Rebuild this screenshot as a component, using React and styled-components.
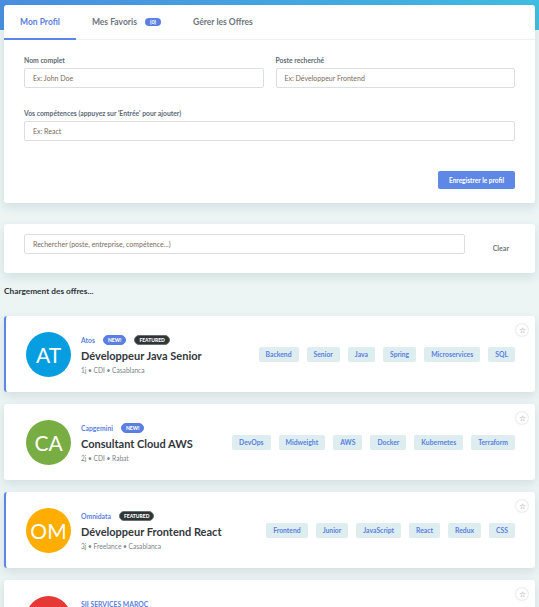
import React from 'react';
import styled, { createGlobalStyle } from 'styled-components';

const GlobalStyle = createGlobalStyle`
  html, body { margin: 0; padding: 0; }
  body {
    font-family: Lato, "Open Sans", sans-serif;
    background: #ecf4f4;
  }
`;

const Page = styled.div`
  min-height: 100vh;
  padding: 5px 4px 0;
  box-sizing: border-box;
  background: linear-gradient(90deg, #4a8ee0, #40bde2) top / 100% 30px no-repeat, #ecf4f4;
`;

const Card = styled.div`
  background: #fff;
  border-radius: 3px;
  box-shadow: 0 4px 10px rgba(60, 110, 120, 0.15);
`;

const Tabs = styled.div`
  display: flex;
  height: 34px;
  border-bottom: 1px solid #eef0f2;
`;

const Tab = styled.div`
  display: flex;
  align-items: center;
  gap: 8px;
  padding: 0 16px;
  font-size: 8.5px;
  font-weight: 700;
  color: ${(p) => (p.$active ? '#5b7fe0' : '#6d7580')};
  border-bottom: 2px solid ${(p) => (p.$active ? '#5b86e5' : 'transparent')};
  margin-bottom: -1px;
`;

const CountBadge = styled.span`
  background: #5b7fe0;
  color: #fff;
  font-size: 5.5px;
  padding: 1px 5px;
  border-radius: 6px;
`;

const FormBody = styled.div`
  padding: 16px 20px 14px;
`;

const Grid = styled.div`
  display: grid;
  grid-template-columns: 1fr 1fr;
  gap: 21px 12px;
`;

const Field = styled.div`
  display: flex;
  flex-direction: column;
  gap: 4px;
  grid-column: ${(p) => (p.$full ? '1 / -1' : 'auto')};
`;

const Label = styled.label`
  font-size: 6.8px;
  font-weight: 700;
  color: #5c6a78;
`;

const Input = styled.div`
  height: 20px;
  border: 1px solid #dcdfe2;
  border-radius: 2px;
  box-sizing: border-box;
  display: flex;
  align-items: center;
  padding: 0 8px;
  font-size: 7px;
  color: #7b6a5c;
  flex: ${(p) => (p.$grow ? 1 : 'none')};
`;

const Actions = styled.div`
  display: flex;
  justify-content: flex-end;
  margin-top: 30px;
`;

const SaveButton = styled.button`
  width: 77px;
  height: 18px;
  background: #5f88e6;
  color: #fff;
  border: 0;
  border-radius: 2px;
  font-family: inherit;
  font-size: 6.5px;
  font-weight: 700;
  padding: 0;
`;

const SearchCard = styled(Card)`
  margin-top: 21px;
  padding: 10px 20px 19px;
  display: flex;
  align-items: center;
  gap: 28px;
`;

const ClearText = styled.span`
  font-size: 7px;
  font-weight: 700;
  color: #6d7580;
  margin-top: 8px;
  margin-right: 6px;
`;

const Loading = styled.div`
  margin: 13px 0 20px;
  font-size: 8.3px;
  font-weight: 700;
  color: #2d3238;
`;

const JobList = styled.div`
  display: flex;
  flex-direction: column;
  gap: 12px;
`;

const JobCard = styled(Card)`
  position: relative;
  height: 76px;
  display: flex;
  align-items: center;
  padding: 0 20px 0 20px;
  box-sizing: border-box;
  border-left: 2px solid ${(p) => (p.$featured ? '#5b86e5' : 'transparent')};
`;

const Avatar = styled.div`
  width: 45px;
  height: 45px;
  border-radius: 50%;
  flex: none;
  background: ${(p) => p.$color};
  color: #fff;
  font-size: 21px;
  display: flex;
  align-items: center;
  justify-content: center;
`;

const Info = styled.div`
  margin-left: 10px;
  display: flex;
  flex-direction: column;
  gap: 4px;
`;

const TopLine = styled.div`
  display: flex;
  align-items: center;
  gap: 8px;
`;

const Company = styled.span`
  font-size: 6.8px;
  font-weight: 700;
  color: #5b7fe0;
`;

const Pill = styled.span`
  font-size: 5px;
  font-weight: 900;
  color: #fff;
  background: ${(p) => (p.$dark ? '#2f3437' : '#5b7fe0')};
  border: ${(p) => (p.$dark ? '1px solid #6a6f72' : '1px solid #5b7fe0')};
  padding: 1px 4px;
  border-radius: 6px;
`;

const Title = styled.div`
  font-size: 11px;
  font-weight: 700;
  color: #33373b;
`;

const Meta = styled.div`
  font-size: 6.6px;
  color: #7b838b;
`;

const Tags = styled.div`
  margin-left: auto;
  display: flex;
  gap: 8px;
`;

const Tag = styled.span`
  background: #ddedf0;
  color: #5b7fe0;
  font-size: 6.8px;
  font-weight: 700;
  padding: 0 7px;
  height: 15px;
  display: flex;
  align-items: center;
  border-radius: 2px;
`;

const StarButton = styled.div`
  position: absolute;
  top: 8px;
  right: 7px;
  width: 12px;
  height: 12px;
  border-radius: 50%;
  background: #fff;
  box-shadow: 0 0 2px rgba(0, 0, 0, 0.25);
  display: flex;
  align-items: center;
  justify-content: center;
  font-size: 8px;
  color: #7b838b;
`;

const jobs = [
  {
    initials: 'AT', color: '#069ee0', company: 'Atos', isNew: true, featured: true,
    title: 'Développeur Java Senior', meta: '1j • CDI • Casablanca',
    tags: ['Backend', 'Senior', 'Java', 'Spring', 'Microservices', 'SQL'],
  },
  {
    initials: 'CA', color: '#78ad43', company: 'Capgemini', isNew: true, featured: false,
    title: 'Consultant Cloud AWS', meta: '2j • CDI • Rabat',
    tags: ['DevOps', 'Midweight', 'AWS', 'Docker', 'Kubernetes', 'Terraform'],
  },
  {
    initials: 'OM', color: '#ffae00', company: 'Omnidata', isNew: false, featured: true,
    title: 'Développeur Frontend React', meta: '3j • Freelance • Casablanca',
    tags: ['Frontend', 'Junior', 'JavaScript', 'React', 'Redux', 'CSS'],
  },
  {
    initials: 'SI', color: '#e53935', company: 'SII SERVICES MAROC', isNew: false, featured: false,
    title: 'Ingénieur Système', meta: '4j • CDI • Rabat',
    tags: [],
  },
];

const App = () => (
  <>
    <GlobalStyle />
    <Page>
      <Card>
        <Tabs>
          <Tab $active>Mon Profil</Tab>
          <Tab>Mes Favoris <CountBadge>(0)</CountBadge></Tab>
          <Tab>Gérer les Offres</Tab>
        </Tabs>
        <FormBody>
          <Grid>
            <Field>
              <Label>Nom complet</Label>
              <Input>Ex: John Doe</Input>
            </Field>
            <Field>
              <Label>Poste recherché</Label>
              <Input>Ex: Développeur Frontend</Input>
            </Field>
            <Field $full>
              <Label>Vos compétences (appuyez sur 'Entrée' pour ajouter)</Label>
              <Input>Ex: React</Input>
            </Field>
          </Grid>
          <Actions>
            <SaveButton>Enregistrer le profil</SaveButton>
          </Actions>
        </FormBody>
      </Card>

      <SearchCard>
        <Input $grow>Rechercher (poste, entreprise, compétence...)</Input>
        <ClearText>Clear</ClearText>
      </SearchCard>

      <Loading>Chargement des offres...</Loading>

      <JobList>
        {jobs.map((job) => (
          <JobCard key={job.initials} $featured={job.featured}>
            <Avatar $color={job.color}>{job.initials}</Avatar>
            <Info>
              <TopLine>
                <Company>{job.company}</Company>
                {job.isNew && <Pill>NEW!</Pill>}
                {job.featured && <Pill $dark>FEATURED</Pill>}
              </TopLine>
              <Title>{job.title}</Title>
              <Meta>{job.meta}</Meta>
            </Info>
            <Tags>
              {job.tags.map((t) => (
                <Tag key={t}>{t}</Tag>
              ))}
            </Tags>
            <StarButton>☆</StarButton>
          </JobCard>
        ))}
      </JobList>
    </Page>
  </>
);

export default App;
